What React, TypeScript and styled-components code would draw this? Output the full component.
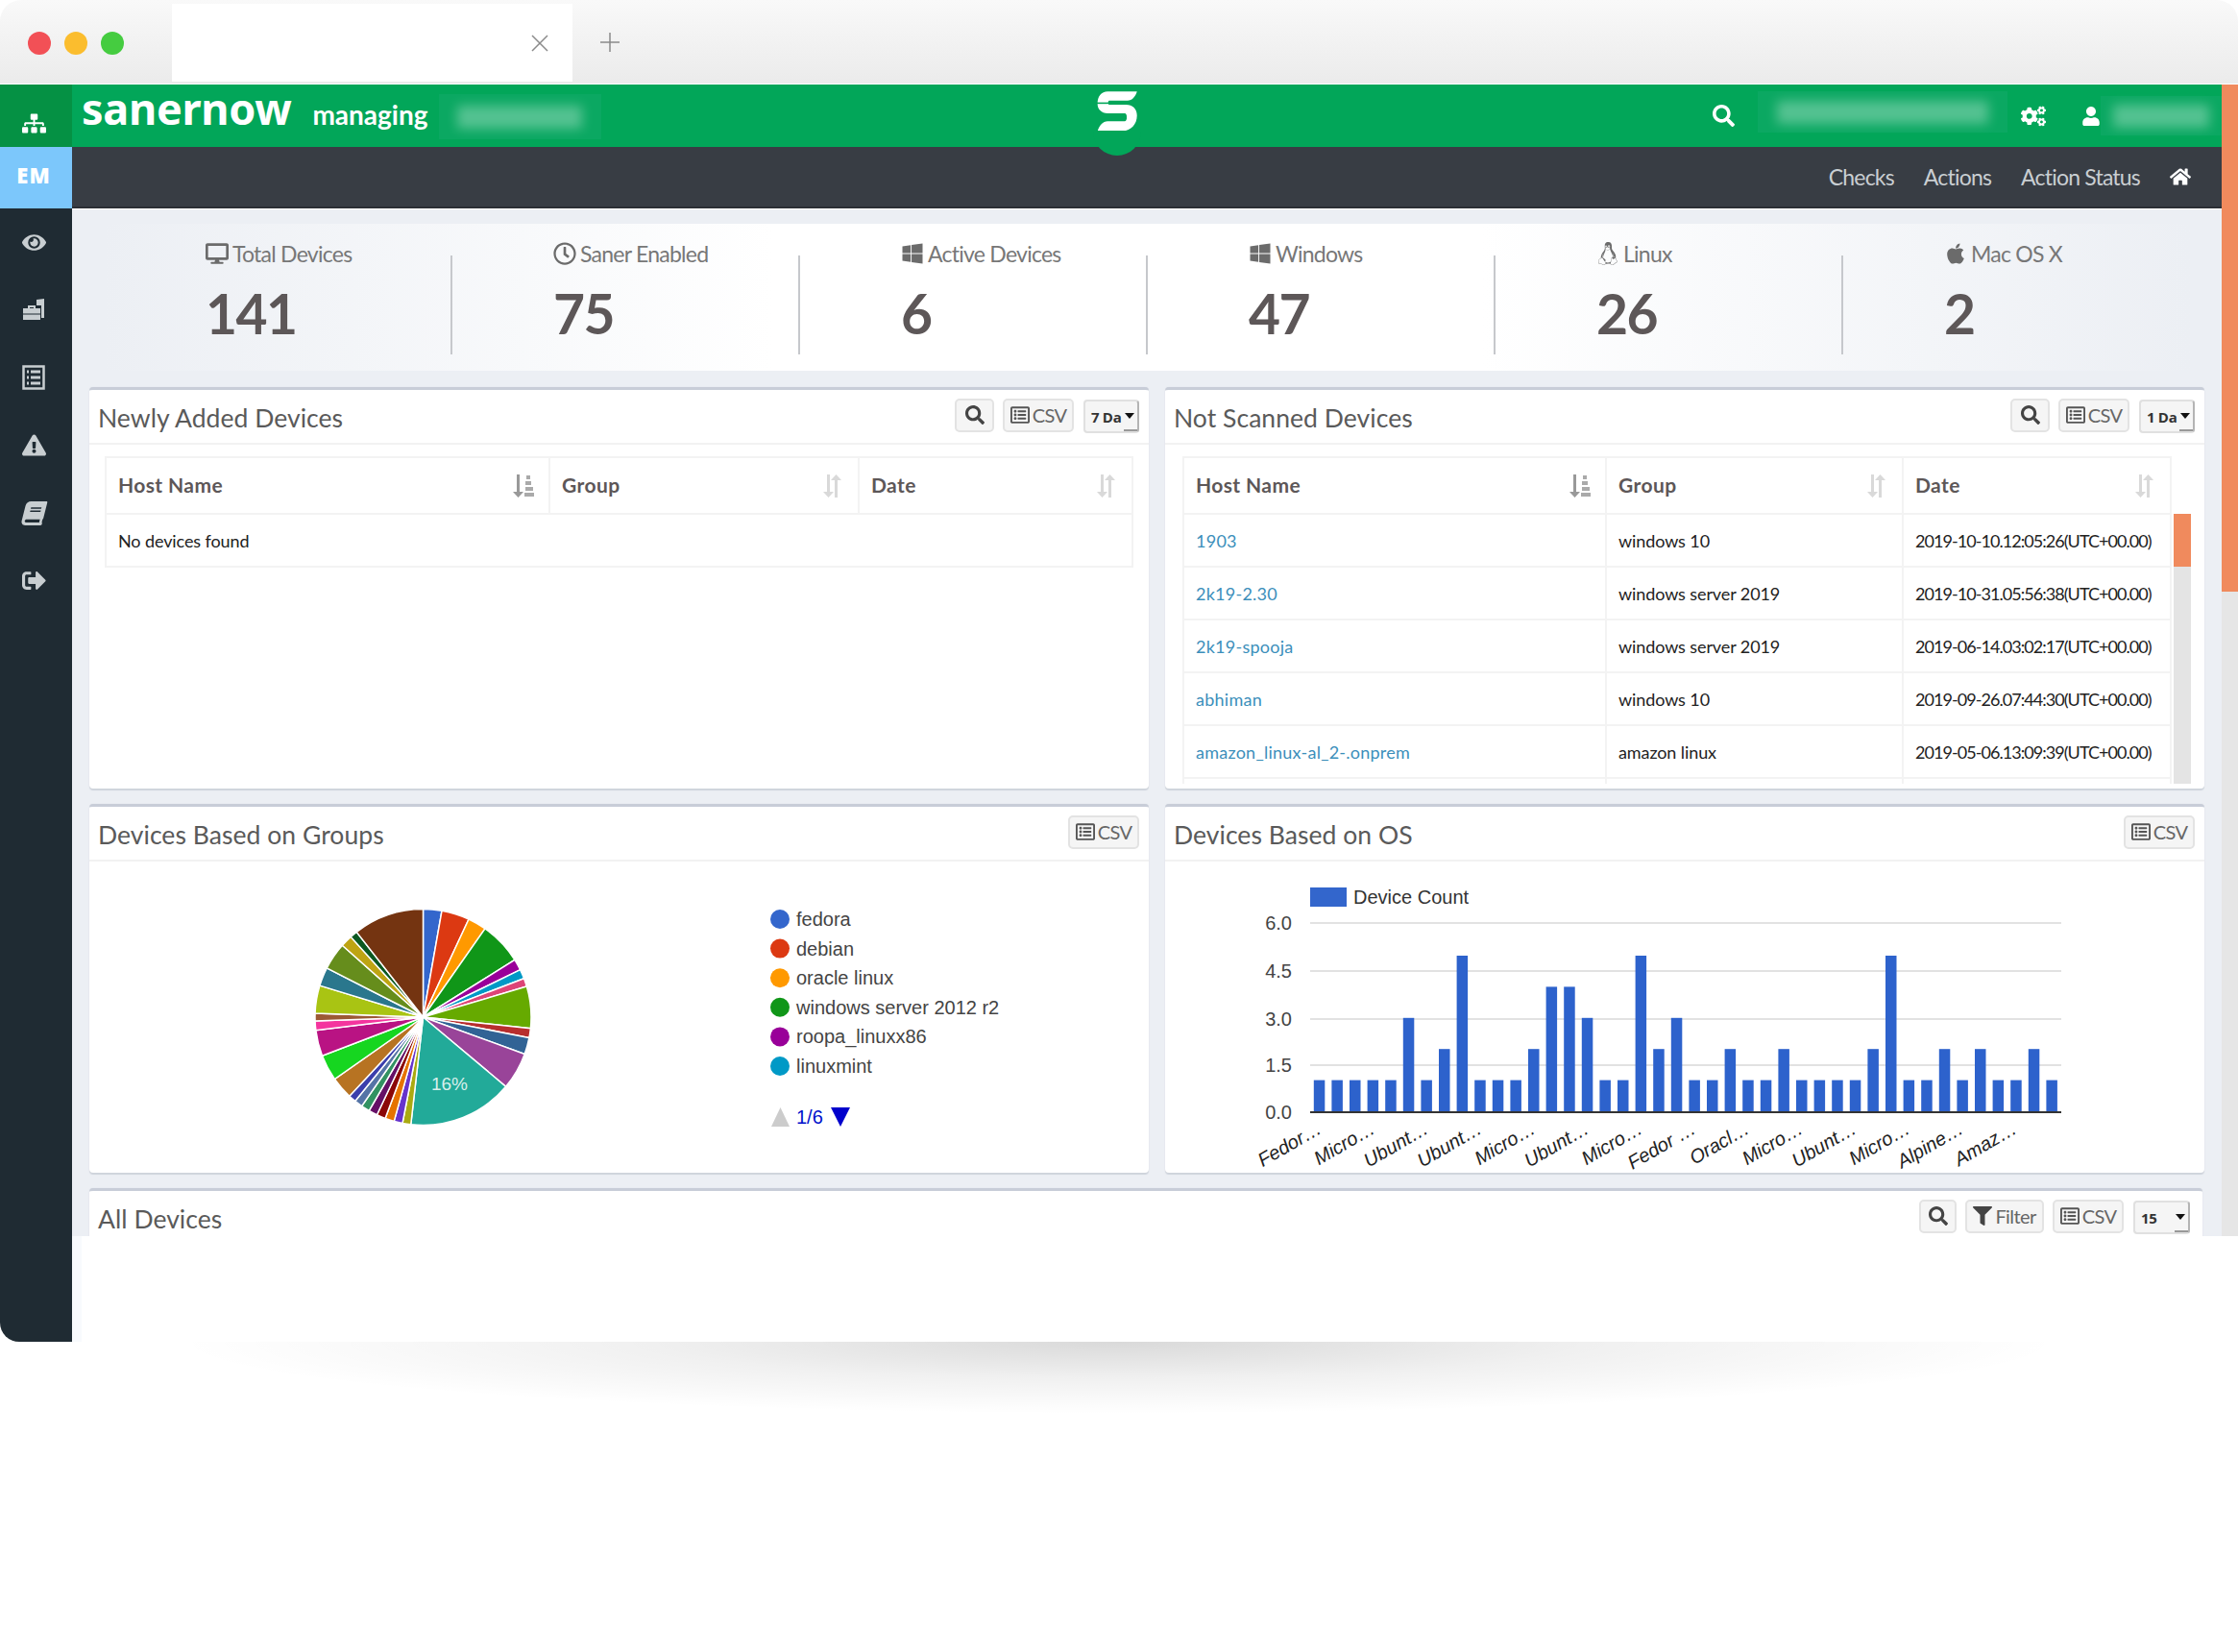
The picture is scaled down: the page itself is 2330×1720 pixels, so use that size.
import React from "react";
import styled, { createGlobalStyle } from "styled-components";
import {
  FaSitemap, FaEye, FaExclamationTriangle, FaBook, FaSignOutAlt, FaDesktop, FaRegClock,
  FaWindows, FaLinux, FaApple, FaCogs, FaUser, FaHome, FaSearch, FaFilter, FaRegListAlt,
} from "react-icons/fa";

const Global = createGlobalStyle`
  html, body { margin: 0; padding: 0; background: #fff; }
  * { box-sizing: border-box; }
  body { font-family: "Lato", "Noto Sans", sans-serif; }
`;

const Page = styled.div`
  width: 2330px;
  height: 1720px;
  background: #fff;
  overflow: hidden;
`;
const Chrome = styled.header`
  height: 88px;
  display: flex;
  align-items: flex-start;
  padding-left: 29px;
  border-radius: 22px 22px 0 0;
  background: linear-gradient(#f9f9f9, #ebebeb);
  border-bottom: 1px solid #fff;
`;
const Lights = styled.div`
  display: flex;
  gap: 14px;
  margin-top: 33px;
`;
const Light = styled.span<{ $c: string }>`
  width: 24px;
  height: 24px;
  border-radius: 50%;
  background: ${(p) => p.$c};
`;
const Tab = styled.div`
  width: 417px;
  height: 81px;
  margin: 4px 0 0 50px;
  background: #fff;
  display: flex;
  align-items: center;
  justify-content: flex-end;
  padding-right: 25px;
  color: #8a8a8a;
`;
const PlusMark = styled.div`
  margin: 34px 0 0 29px;
  color: #8a8a8a;
  line-height: 0;
`;
const Shell = styled.div`
  display: flex;
  height: 1309px;
`;
const Sidebar = styled.nav`
  width: 75px;
  flex: none;
  background: #1f2b33;
  border-radius: 0 0 0 20px;
  color: #c8ced1;
`;
const SideTop = styled.div`
  height: 65px;
  background: #059144;
  color: #fff;
  display: flex;
  align-items: flex-end;
  justify-content: center;
  padding: 0 5px 12px 0;
  font-size: 25px;
`;
const SideEm = styled.div`
  height: 64px;
  background: #7cc7fb;
  color: #fff;
  font: 800 22px "Open Sans", sans-serif;
  letter-spacing: 1px;
  display: flex;
  align-items: center;
  justify-content: center;
  padding: 0 5px 6px 0;
`;
const SideItem = styled.div`
  height: 70.5px;
  display: flex;
  align-items: center;
  justify-content: center;
  padding-right: 5px;
  font-size: 25px;
`;
const SlantIcon = styled.span`
  display: flex;
  transform: skewX(-14deg);
`;
const Main = styled.div`
  flex: 1;
  display: flex;
`;
const Column = styled.div`
  width: 2238px;
  display: flex;
  flex-direction: column;
`;
const GreenBar = styled.div`
  position: relative;
  height: 65px;
  flex: none;
  background: #02a659;
  display: flex;
  align-items: center;
  padding-left: 10px;
  color: #fff;
`;
const Logo = styled.div`
  font: 700 45px/1 "Noto Sans", sans-serif;
  letter-spacing: -0.3px;
  margin-top: -16px;
`;
const Managing = styled.div`
  font: 700 28px/1 "Lato", sans-serif;
  margin: -4px 0 0 22px;
`;
const BlurPatch = styled.div<{ $w: number; $h: number; $m: string }>`
  width: ${(p) => p.$w}px;
  height: ${(p) => p.$h}px;
  margin: ${(p) => p.$m};
  flex: none;
  background: #0ba862;
  display: flex;
  align-items: center;
  justify-content: center;
`;
const BlurInk = styled.div<{ $w: number }>`
  width: ${(p) => p.$w}px;
  height: 24px;
  background: rgba(255, 255, 255, 0.3);
  filter: blur(6px);
`;
const Spacer = styled.div`
  flex: 1;
`;
const Badge = styled.div`
  position: absolute;
  left: 1063px;
  top: 0;
  width: 50px;
  height: 74px;
  border-radius: 0 0 25px 25px;
  background: #02a659;
  display: flex;
  align-items: flex-start;
  justify-content: center;
  padding-top: 6px;
`;
const BarIcon = styled.span<{ $s: number; $m: string }>`
  display: flex;
  font-size: ${(p) => p.$s}px;
  margin: ${(p) => p.$m};
`;
const SubBar = styled.div`
  height: 64px;
  flex: none;
  background: #383d44;
  border-bottom: 2px solid #2b2f35;
  display: flex;
  align-items: center;
  justify-content: flex-end;
  gap: 31px;
  padding: 0 32px 0 0;
  color: #c9ced2;
  font-size: 23px;
`;
const NavLink = styled.span`
  letter-spacing: -0.8px;
`;
const HomeIcon = styled.span`
  display: flex;
  color: #fff;
  font-size: 22px;
`;
const Content = styled.main`
  height: 1070px;
  flex: none;
  overflow: hidden;
  background: #eceff4;
  border-top: 1px solid #fff;
  padding: 15px 0 0 18px;
`;
const BottomBlank = styled.div`
  flex: 1;
  background: #fff;
  border-left: 10px solid #f8fafd;
`;
const PageScroll = styled.div`
  width: 17px;
  height: 1199px;
  background: #e6e6e6;
`;
const PageThumb = styled.div`
  height: 528px;
  background: #f08a5d;
`;
const StatStrip = styled.section`
  display: grid;
  grid-template-columns: repeat(6, 362px);
  height: 153px;
  margin: 0 0 17px 16px;
  width: 2172px;
  background: linear-gradient(90deg, #eceff4, #fff 32%, #fff 66%, #eceff4);
`;
const Stat = styled.div`
  position: relative;
  padding: 15px 0 0 105px;
  &:not(:last-child)::after {
    content: "";
    position: absolute;
    right: 0;
    top: 33px;
    height: 103px;
    width: 2px;
    background: #c6c8cc;
  }
`;
const StatLabel = styled.div`
  display: flex;
  align-items: center;
  gap: 4px;
  height: 32px;
  font-size: 23px;
  letter-spacing: -0.75px;
  color: #777;
  white-space: nowrap;
`;
const StatIcon = styled.span`
  display: flex;
  font-size: 24px;
  color: #6b6b6b;
`;
const StatValue = styled.div`
  font: 700 57px/1 "Lato", sans-serif;
  letter-spacing: -1.5px;
  color: #5d5758;
  margin-top: 18px;
`;
const Grid = styled.div`
  display: grid;
  grid-template-columns: 1103px 1082px;
  grid-template-rows: 418px 384px auto;
  gap: 16px 17px;
`;
const Panel = styled.section<{ $wide?: boolean }>`
  background: #fff;
  border-top: 3px solid #c8cdd8;
  border-radius: 4px;
  box-shadow: 0 2px 1px #cfd4dc, 0 0 1px #d3d8e0;
  overflow: hidden;
  ${(p) => (p.$wide ? "grid-column: 1 / 3; width: 2200px; height: 300px;" : "")}
`;
const PanelHead = styled.div<{ $pr?: number }>`
  height: 57px;
  display: flex;
  align-items: center;
  padding: 0 ${(p) => p.$pr ?? 10}px 0 9px;
  border-bottom: 2px solid #f2f2f2;
`;
const PanelTitle = styled.h2`
  margin: 4px 0 0;
  flex: 1;
  font: 400 26.5px/1 "Lato", sans-serif;
  letter-spacing: 0.05px;
  color: #5a5a5a;
`;
const Tools = styled.div`
  display: flex;
  gap: 9px;
  align-items: center;
  margin-top: -3px;
`;
const ToolButton = styled.button<{ $w: number }>`
  width: ${(p) => p.$w}px;
  height: 35px;
  flex: none;
  padding: 0;
  display: flex;
  align-items: center;
  justify-content: center;
  gap: 3px;
  background: #f5f5f5;
  border: 2px solid #e3e3e3;
  border-radius: 5px;
  font: 400 20px "Lato", sans-serif;
  letter-spacing: -0.6px;
  color: #666;
`;
const ToolIcon = styled.span<{ $c?: string }>`
  display: flex;
  font-size: 20px;
  color: ${(p) => p.$c ?? "#444"};
`;
const Select = styled.div<{ $w: number }>`
  position: relative;
  width: ${(p) => p.$w}px;
  height: 35px;
  flex: none;
  margin: 2px 0 0 1px;
  padding: 2px 0 0 6px;
  display: flex;
  align-items: center;
  background: #f5f5f5;
  border: 2px solid #e0e0e0;
  border-right-color: #b4b4b4;
  border-radius: 4px;
  font: 700 15px "Open Sans", sans-serif;
  letter-spacing: -0.3px;
  color: #333;
  &::before {
    content: "";
    position: absolute;
    right: 0;
    bottom: 0;
    width: 14px;
    height: 2px;
    background: #999;
  }
  &::after {
    content: "";
    position: absolute;
    right: 3px;
    top: 12px;
    border: 5px solid transparent;
    border-top: 6px solid #111;
    border-bottom: 0;
  }
`;
const TableRow = styled.div`
  display: flex;
  gap: 2px;
  height: 341px;
  margin: 12px 0 0 18px;
  overflow: hidden;
`;
const NarrowWrap = styled.div`
  height: 341px;
  margin: 12px 0 0 16px;
`;
const Table = styled.table<{ $w: number }>`
  width: ${(p) => p.$w}px;
  flex: none;
  table-layout: fixed;
  border-collapse: collapse;
  font: 400 18px "Lato", sans-serif;
  letter-spacing: -0.1px;
  color: #222;
  align-self: flex-start;
`;
const Th = styled.th<{ $w: number }>`
  position: relative;
  width: ${(p) => p.$w}px;
  height: 59px;
  padding: 0 12px 2px;
  text-align: left;
  font: 700 21px "Lato", sans-serif;
  letter-spacing: 0.4px;
  color: #5d5758;
  border: 2px solid #f3f3f3;
`;
const SortIcon = styled.svg`
  position: absolute;
  right: 14px;
  top: 16px;
`;
const Td = styled.td<{ $tight?: boolean }>`
  height: 55px;
  padding: 1px 12px 0;
  white-space: nowrap;
  border: 2px solid #f3f3f3;
  ${(p) => (p.$tight ? "letter-spacing: -0.95px;" : "")}
`;
const HostLink = styled.a`
  color: #3c8fbb;
  text-decoration: none;
  letter-spacing: 0.25px;
`;
const ScrollTrack = styled.div`
  width: 18px;
  flex: none;
  margin-top: 60px;
  background: #e4e4e4;
`;
const ScrollThumb = styled.div`
  height: 55px;
  background: #f08a5d;
`;
const ChartSvg = styled.svg`
  display: block;
`;
const ShadowBand = styled.div`
  width: 1960px;
  height: 75px;
  margin: 0 auto;
  background: radial-gradient(ellipse 50% 100% at 50% 0, rgba(0, 0, 0, 0.15), rgba(0, 0, 0, 0.06) 50%, transparent 100%);
`;

const SortArrows = () => (
  <SortIcon width="24" height="26" viewBox="0 0 24 26" fill="#d9d9d9">
    <path d="M6 1h3v18h4l-5.500 6L2 19h4zM17 25h-3V7h-4l5.500-6L21 7h-4z" />
  </SortIcon>
);
const SortAmount = () => (
  <SortIcon width="24" height="26" viewBox="0 0 24 26" fill="#aaa">
    <path d="M5 1h3v18h4l-5.500 6L1 19h4z" fill="#999" />
    <path d="M15 2h4v4h-4zM14 8h6v4h-6zM14 14h8v4h-8zM13 20h10v4H13z" />
  </SortIcon>
);

const Sidewise = () => (
  <svg width="27" height="27" viewBox="0 0 27 27" fill="currentColor">
    <path d="M16 3l8-1v20l-3 0V9h-5z" />
    <path d="M2 12h5V9h8v3h5v12H2zM9 11v1h4v-1zM2 17.500h18v1H2z" fillRule="evenodd" />
  </svg>
);
const ListBox = () => (
  <svg width="24" height="26" viewBox="0 0 24 26" fill="none" stroke="currentColor">
    <rect x="1.500" y="1.500" width="21" height="23" strokeWidth="2.500" />
    <path d="M5 7h2M9 7h10M5 13h2M9 13h10M5 19h2M9 19h10" strokeWidth="3" />
  </svg>
);

const slices: [number, string][] = [
  [10, "#3366cc"], [25, "#dc3912"], [35, "#ff9900"], [58, "#109618"], [64, "#990099"], [69, "#0099c6"],
  [73.5, "#dd4477"], [96, "#66aa00"], [101, "#b82e2e"], [110, "#316395"], [130, "#994499"], [186.5, "#22aa99"],
  [191, "#aaaa11"], [195.6, "#6633cc"], [200.5, "#e67300"], [205.3, "#8b0707"], [210, "#651067"], [214.6, "#329262"],
  [219, "#5574a6"], [223, "#3b3eac"], [235, "#b77322"], [249, "#16d620"], [263, "#b91383"], [268, "#f4359e"],
  [272, "#9c5935"], [287, "#a9c413"], [297, "#2a778d"], [311.6, "#668d1c"], [318, "#bea413"], [322, "#0c5922"],
  [360, "#743411"],
];
const legend: [string, string][] = [
  ["fedora", "#3366cc"], ["debian", "#dc3912"], ["oracle linux", "#ff9900"],
  ["windows server 2012 r2", "#109618"], ["roopa_linuxx86", "#990099"], ["linuxmint", "#0099c6"],
];
const polar = (a: number, r: number): string => {
  const t = (a * Math.PI) / 180;
  return `${(440.5 + r * Math.sin(t)).toFixed(2)} ${(1059 - r * Math.cos(t)).toFixed(2)}`;
};

const PieChart = () => (
  <ChartSvg width={1103} height={323} viewBox="93 897 1103 323">
    {slices.map(([end, color], i) => {
      const start = i === 0 ? 0 : slices[i - 1][0];
      return (
        <path
          key={color}
          d={`M440.500 1059L${polar(start, 112.5)}A112.500 112.500 0 ${end - start > 180 ? 1 : 0} 1 ${polar(end, 112.5)}Z`}
          fill={color}
          stroke="#fff"
          strokeWidth="1.500"
        />
      );
    })}
    <text x="468" y="1135" textAnchor="middle" fontFamily="Liberation Sans" fontSize="19" fill="#d6efeb">16%</text>
    {legend.map(([name, color], i) => (
      <g key={name}>
        <circle cx="812" cy={957 + i * 30.6} r="10" fill={color} />
        <text x="829" y={964 + i * 30.6} fontFamily="Liberation Sans" fontSize="20" fill="#444">{name}</text>
      </g>
    ))}
    <path d="M803 1173l9.500-20 9.500 20z" fill="#ccc" />
    <text x="829" y="1170" fontFamily="Liberation Sans" fontSize="20" fill="#0011cc">1/6</text>
    <path d="M865 1153h20l-10 20z" fill="#0000cc" />
  </ChartSvg>
);

const bars = [1, 1, 1, 1, 1, 3, 1, 2, 5, 1, 1, 1, 2, 4, 4, 3, 1, 1, 5, 2, 3, 1, 1, 2, 1, 1, 2, 1, 1, 1, 1, 2, 5, 1, 1, 2, 1, 2, 1, 1, 2, 1];
const ticks: [string, number][] = [["6.0", 961], ["4.5", 1011], ["3.0", 1061], ["1.5", 1109], ["0.0", 1158]];
const xLabels = ["Fedor…", "Micro…", "Ubunt…", "Ubunt…", "Micro…", "Ubunt…", "Micro…", "Fedor …", "Oracl…", "Micro…", "Ubunt…", "Micro…", "Alpine…", "Amaz…"];

const BarChart = () => (
  <ChartSvg width={1082} height={323} viewBox="1213 897 1082 323">
    <rect x="1364" y="924" width="38" height="20" fill="#3366cc" />
    <text x="1409" y="941" fontFamily="Liberation Sans" fontSize="20" fill="#333">Device Count</text>
    {ticks.map(([t, y]) => (
      <g key={t}>
        <rect x="1364" y={y - 1} width="782" height="2" fill={t === "0.0" ? "#333" : "#e2e2e2"} />
        <text x="1345" y={y + 7} textAnchor="end" fontFamily="Liberation Sans" fontSize="20" fill="#444">{t}</text>
      </g>
    ))}
    {bars.map((v, i) => (
      <rect key={i} x={1367.800 + i * 18.600} y={1157 - v * 32.400} width="11.500" height={v * 32.400} fill="#2d62cc" />
    ))}
    {xLabels.map((l, i) => (
      <text
        key={i}
        transform={`translate(${1377 + i * 55.700} 1179) rotate(-30)`}
        textAnchor="end"
        fontFamily="Liberation Sans"
        fontStyle="italic"
        fontSize="20"
        fill="#222"
      >
        {l}
      </text>
    ))}
  </ChartSvg>
);

const SLogo = () => (
  <svg width="44" height="44" viewBox="62 24 138 138">
    <path
      fill="#fff"
      d="M100 28H196C191 44 180 58 165 58H105C101 58 101 71 105 71H160C182 71 196 85 196 106C196 135 176 156 150 156H68C72 140 85 125 100 125H156C165 125 165 99 156 99H100C80 99 67 86 67 68C67 44 80 28 100 28Z"
    />
    <path d="M64 66H106" stroke="#02a659" strokeWidth="5" fill="none" />
  </svg>
);

const Csv = ({ w }: { w: number }) => (
  <ToolButton $w={w}><ToolIcon $c="#555"><FaRegListAlt /></ToolIcon>CSV</ToolButton>
);
const SearchBtn = ({ w }: { w: number }) => (
  <ToolButton $w={w}><ToolIcon><FaSearch /></ToolIcon></ToolButton>
);
const HeadRow = ({ cols }: { cols: number[] }) => (
  <thead>
    <tr>
      <Th $w={cols[0]}>Host Name<SortAmount /></Th>
      <Th $w={cols[1]}>Group<SortArrows /></Th>
      <Th $w={cols[2]}>Date<SortArrows /></Th>
    </tr>
  </thead>
);

const stats = [
  { icon: <FaDesktop />, label: "Total Devices", value: "141" },
  { icon: <FaRegClock />, label: "Saner Enabled", value: "75" },
  { icon: <FaWindows />, label: "Active Devices", value: "6" },
  { icon: <FaWindows />, label: "Windows", value: "47" },
  { icon: <FaLinux />, label: "Linux", value: "26" },
  { icon: <FaApple />, label: "Mac OS X", value: "2" },
];
const rows = [
  ["1903", "windows 10", "2019-10-10.12:05:26(UTC+00.00)"],
  ["2k19-2.30", "windows server 2019", "2019-10-31.05:56:38(UTC+00.00)"],
  ["2k19-spooja", "windows server 2019", "2019-06-14.03:02:17(UTC+00.00)"],
  ["abhiman", "windows 10", "2019-09-26.07:44:30(UTC+00.00)"],
  ["amazon_linux-al_2-.onprem", "amazon linux", "2019-05-06.13:09:39(UTC+00.00)"],
];

export default function App() {
  return (
    <Page>
      <Global />
      <Chrome>
        <Lights>
          <Light $c="#f25056" />
          <Light $c="#fbbd2e" />
          <Light $c="#45cc40" />
        </Lights>
        <Tab>
          <svg width="18" height="18" viewBox="0 0 18 18" stroke="currentColor" strokeWidth="1.500">
            <path d="M1 1l16 16M17 1L1 17" />
          </svg>
        </Tab>
        <PlusMark>
          <svg width="20" height="20" viewBox="0 0 20 20" stroke="currentColor" strokeWidth="1.500">
            <path d="M10 0v20M0 10h20" />
          </svg>
        </PlusMark>
      </Chrome>
      <Shell>
        <Sidebar>
          <SideTop><FaSitemap /></SideTop>
          <SideEm>EM</SideEm>
          <SideItem><FaEye /></SideItem>
          <SideItem><Sidewise /></SideItem>
          <SideItem><ListBox /></SideItem>
          <SideItem><FaExclamationTriangle /></SideItem>
          <SideItem><SlantIcon><FaBook /></SlantIcon></SideItem>
          <SideItem><FaSignOutAlt /></SideItem>
        </Sidebar>
        <Main>
          <Column>
            <GreenBar>
              <Logo>sanernow</Logo>
              <Managing>managing</Managing>
              <BlurPatch $w={169} $h={47} $m="2px 0 0 11px"><BlurInk $w={130} /></BlurPatch>
              <Badge><SLogo /></Badge>
              <Spacer />
              <BarIcon $s={23} $m="0 24px 0 0"><FaSearch /></BarIcon>
              <BlurPatch $w={260} $h={43} $m="-8px 0 0 0"><BlurInk $w={220} /></BlurPatch>
              <BarIcon $s={26} $m="0 37px 0 14px"><FaCogs /></BarIcon>
              <BarIcon $s={20} $m="0"><FaUser /></BarIcon>
              <BlurPatch $w={126} $h={41} $m="0"><BlurInk $w={100} /></BlurPatch>
            </GreenBar>
            <SubBar>
              <NavLink>Checks</NavLink>
              <NavLink>Actions</NavLink>
              <NavLink>Action Status</NavLink>
              <HomeIcon><FaHome /></HomeIcon>
            </SubBar>
            <Content>
              <StatStrip>
                {stats.map((s) => (
                  <Stat key={s.label}>
                    <StatLabel><StatIcon>{s.icon}</StatIcon>{s.label}</StatLabel>
                    <StatValue>{s.value}</StatValue>
                  </Stat>
                ))}
              </StatStrip>
              <Grid>
                <Panel>
                  <PanelHead>
                    <PanelTitle>Newly Added Devices</PanelTitle>
                    <Tools>
                      <SearchBtn w={41} />
                      <Csv w={74} />
                      <Select $w={58}>7 Da</Select>
                    </Tools>
                  </PanelHead>
                  <NarrowWrap>
                    <Table $w={1069}>
                      <HeadRow cols={[462, 322, 285]} />
                      <tbody>
                        <tr><Td colSpan={3}>No devices found</Td></tr>
                      </tbody>
                    </Table>
                  </NarrowWrap>
                </Panel>
                <Panel>
                  <PanelHead>
                    <PanelTitle>Not Scanned Devices</PanelTitle>
                    <Tools>
                      <SearchBtn w={41} />
                      <Csv w={74} />
                      <Select $w={58}>1 Da</Select>
                    </Tools>
                  </PanelHead>
                  <TableRow>
                    <Table $w={1028}>
                      <HeadRow cols={[440, 309, 279]} />
                      <tbody>
                        {rows.map((r) => (
                          <tr key={r[0]}>
                            <Td><HostLink href="#">{r[0]}</HostLink></Td>
                            <Td>{r[1]}</Td>
                            <Td $tight>{r[2]}</Td>
                          </tr>
                        ))}
                        <tr><Td /><Td /><Td /></tr>
                      </tbody>
                    </Table>
                    <ScrollTrack><ScrollThumb /></ScrollTrack>
                  </TableRow>
                </Panel>
                <Panel>
                  <PanelHead>
                    <PanelTitle>Devices Based on Groups</PanelTitle>
                    <Tools><Csv w={74} /></Tools>
                  </PanelHead>
                  <PieChart />
                </Panel>
                <Panel>
                  <PanelHead>
                    <PanelTitle>Devices Based on OS</PanelTitle>
                    <Tools><Csv w={74} /></Tools>
                  </PanelHead>
                  <BarChart />
                </Panel>
                <Panel $wide>
                  <PanelHead $pr={13}>
                    <PanelTitle>All Devices</PanelTitle>
                    <Tools>
                      <SearchBtn w={39} />
                      <ToolButton $w={82}><ToolIcon $c="#444"><FaFilter /></ToolIcon>Filter</ToolButton>
                      <Csv w={74} />
                      <Select $w={59}>15</Select>
                    </Tools>
                  </PanelHead>
                </Panel>
              </Grid>
            </Content>
            <BottomBlank />
          </Column>
          <PageScroll><PageThumb /></PageScroll>
        </Main>
      </Shell>
      <ShadowBand />
    </Page>
  );
}
